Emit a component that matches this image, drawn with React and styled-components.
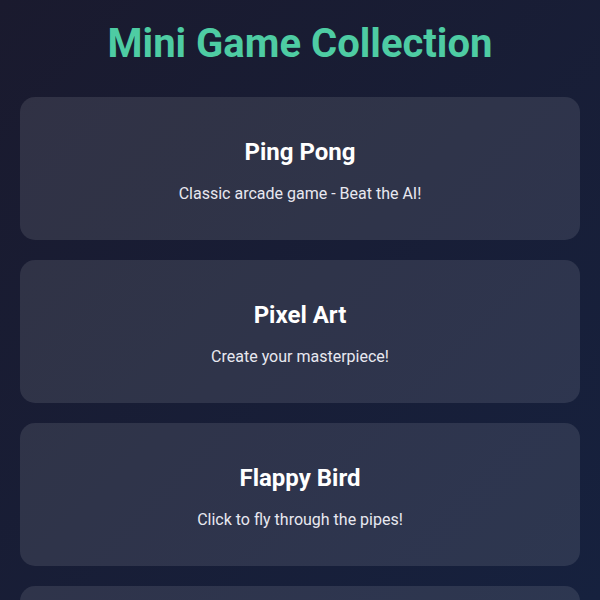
import styled, { createGlobalStyle } from "styled-components";

const GlobalStyle = createGlobalStyle`
  html, body {
    margin: 0;
    padding: 0;
  }

  body {
    min-height: 100vh;
    background: linear-gradient(135deg, #1a1a2e 0%, #16213e 100%);
    background-attachment: fixed;
    font-family: Roboto, "Liberation Sans", sans-serif;
    color: #ffffff;
  }
`;

const games = [
  { title: "Ping Pong", description: "Classic arcade game - Beat the AI!" },
  { title: "Pixel Art", description: "Create your masterpiece!" },
  { title: "Flappy Bird", description: "Click to fly through the pipes!" },
  { title: "Snake", description: "Eat the food and grow longer!" },
];

function App() {
  return (
    <>
      <GlobalStyle />
      <Page>
        <Heading>Mini Game Collection</Heading>
        <GameList>
          {games.map((game) => (
            <GameCard key={game.title}>
              <GameTitle>{game.title}</GameTitle>
              <GameDescription>{game.description}</GameDescription>
            </GameCard>
          ))}
        </GameList>
      </Page>
    </>
  );
}

const Page = styled.div`
  padding: 20px;
`;

const Heading = styled.h1`
  margin: 0 0 30px;
  text-align: center;
  font-size: 40px;
  font-weight: 700;
  color: #4ecca3;
`;

const GameList = styled.div`
  display: flex;
  flex-direction: column;
  gap: 20px;
`;

const GameCard = styled.div`
  height: 143px;
  box-sizing: border-box;
  padding: 41px 20px 0;
  border-radius: 15px;
  background: rgba(255, 255, 255, 0.1);
  text-align: center;
  cursor: pointer;
`;

const GameTitle = styled.h2`
  margin: 0 0 18px;
  font-size: 24px;
  font-weight: 700;
`;

const GameDescription = styled.p`
  margin: 0;
  font-size: 16px;
  color: #e8e8f0;
`;

export default App;
